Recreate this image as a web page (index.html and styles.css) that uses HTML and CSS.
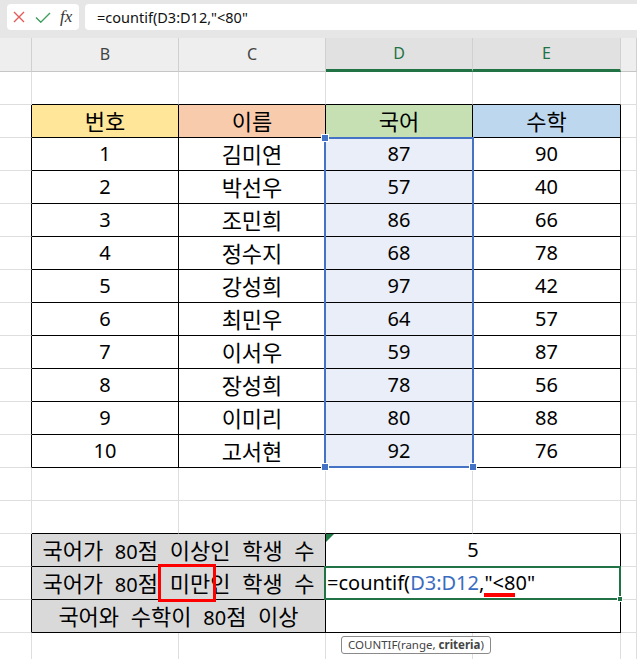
FILE: index.html
```html
<!DOCTYPE html>
<html lang="ko">
<head>
<meta charset="utf-8">
<title>COUNTIF</title>
<link rel="stylesheet" href="styles.css">
</head>
<body>
<div class="topbar">
  <div class="icons">
    <svg class="ix" viewBox="0 0 12 12"><path d="M1 1L11 11M11 1L1 11" stroke="#e25b5b" stroke-width="1.4" fill="none"/></svg>
    <svg class="ic" viewBox="0 0 16 11"><path d="M1 5.4L5.8 10.2L15 1" stroke="#3f9d5e" stroke-width="1.4" fill="none"/></svg>
    <span class="fx">fx</span>
  </div>
  <div class="formula">=countif(D3:D12,"&lt;80"</div>
</div>

<div class="sheet">
  <div class="row hdr">
    <div class="c"></div><div class="c">B</div><div class="c">C</div><div class="c on">D</div><div class="c on">E</div><div class="c"></div>
  </div>
  <div class="row">
    <div class="c"></div><div class="c tb"></div><div class="c tb"></div><div class="c tb"></div><div class="c tb"></div><div class="c"></div>
  </div>
  <div class="row">
    <div class="c lb"></div><div class="c t ko h1">번호</div><div class="c t ko h2">이름</div><div class="c t ko h3">국어</div><div class="c t ko h4">수학</div><div class="c"></div>
  </div>
  <div class="row"><div class="c lb"></div><div class="c t">1</div><div class="c t ko">김미연</div><div class="c t d">87</div><div class="c t">90</div><div class="c"></div></div>
  <div class="row"><div class="c lb"></div><div class="c t">2</div><div class="c t ko">박선우</div><div class="c t d">57</div><div class="c t">40</div><div class="c"></div></div>
  <div class="row"><div class="c lb"></div><div class="c t">3</div><div class="c t ko">조민희</div><div class="c t d">86</div><div class="c t">66</div><div class="c"></div></div>
  <div class="row"><div class="c lb"></div><div class="c t">4</div><div class="c t ko">정수지</div><div class="c t d">68</div><div class="c t">78</div><div class="c"></div></div>
  <div class="row"><div class="c lb"></div><div class="c t">5</div><div class="c t ko">강성희</div><div class="c t d">97</div><div class="c t">42</div><div class="c"></div></div>
  <div class="row"><div class="c lb"></div><div class="c t">6</div><div class="c t ko">최민우</div><div class="c t d">64</div><div class="c t">57</div><div class="c"></div></div>
  <div class="row"><div class="c lb"></div><div class="c t">7</div><div class="c t ko">이서우</div><div class="c t d">59</div><div class="c t">87</div><div class="c"></div></div>
  <div class="row"><div class="c lb"></div><div class="c t">8</div><div class="c t ko">장성희</div><div class="c t d">78</div><div class="c t">56</div><div class="c"></div></div>
  <div class="row"><div class="c lb"></div><div class="c t">9</div><div class="c t ko">이미리</div><div class="c t d">80</div><div class="c t">88</div><div class="c"></div></div>
  <div class="row"><div class="c lb"></div><div class="c t">10</div><div class="c t ko">고서현</div><div class="c t d">92</div><div class="c t">76</div><div class="c"></div></div>
  <div class="row">
    <div class="c"></div><div class="c"></div><div class="c"></div><div class="c"></div><div class="c"></div><div class="c"></div>
  </div>
  <div class="row">
    <div class="c"></div><div class="c tb"></div><div class="c tb"></div><div class="c tb"></div><div class="c tb"></div><div class="c"></div>
  </div>
  <div class="row">
    <div class="c lb"></div><div class="c t ko lab span2">국어가 <span class="n">80</span>점 이상인 학생 수</div><div class="c t span2 flag"><span class="tri"></span>5</div><div class="c"></div>
  </div>
  <div class="row">
    <div class="c lb"></div><div class="c t ko lab span2">국어가 <span class="n">80</span>점 <span class="mm">미만</span>인 학생 수</div><div class="c t span2 edit">=countif(<span class="ref">D3:D12</span>,<span class="ul">"&lt;8</span>0"</div><div class="c"></div>
  </div>
  <div class="row">
    <div class="c lb"></div><div class="c t ko lab span2">국어와 수학이 <span class="n">80</span>점 이상</div><div class="c t span2"></div><div class="c"></div>
  </div>
  <div class="row">
    <div class="c"></div><div class="c"></div><div class="c"></div><div class="c"></div><div class="c"></div><div class="c"></div>
  </div>

  <div class="selbox">
    <span class="hnd tl"></span><span class="hnd bl"></span><span class="hnd br"></span>
  </div>
  <div class="active"><span class="ahnd"></span></div>
  <div class="tip">COUNTIF(range, <b>criteria</b>)</div>
</div>
</body>
</html>
```

FILE: styles.css
```css
* { box-sizing: border-box; }
html, body { margin: 0; padding: 0; }
body {
  width: 637px;
  height: 659px;
  overflow: hidden;
  background: #fff;
  font-family: "Noto Sans", "Noto Sans CJK KR", sans-serif;
  color: #000;
}

/* formula bar */
.topbar {
  height: 38px;
  background: #e6e6e6;
  display: flex;
  align-items: flex-start;
  gap: 6px;
  padding: 4px 0 0 7px;
}
.icons {
  width: 72px;
  height: 26px;
  background: #fff;
  border-radius: 4px;
  display: flex;
  align-items: center;
  padding-left: 6px;
}
.ix { width: 12px; height: 12px; }
.ic { width: 16px; height: 11px; margin-left: 10px; }
.fx {
  margin-left: 9px;
  font-family: "Liberation Serif", "DejaVu Serif", serif;
  font-style: italic;
  font-size: 17px;
  line-height: 26px;
  color: #333;
}
.formula {
  flex: 1;
  height: 26px;
  margin-right: -10px;
  background: #fff;
  border-radius: 4px;
  padding-left: 12px;
  font-size: 14.5px;
  line-height: 26px;
  color: #111;
  white-space: nowrap;
}

/* sheet */
.sheet { position: relative; }
.row {
  display: grid;
  grid-template-columns: 32px 147px 147px 147px 148px 1fr;
  grid-template-rows: 33px;
  height: 33px;
}
.c {
  border-right: 1px solid #dedede;
  border-bottom: 1px solid #dedede;
  text-align: center;
  font-size: 20px;
  line-height: 32px;
  white-space: nowrap;
  min-height: 0;
}
.ko { font-size: 22px; }
.n { font-size: 20px; line-height: 20px; }
.hdr { height: 34px; grid-template-rows: 34px; }
.hdr .c {
  background: #eeeeee;
  border-right-color: #d0d0d0;
  border-bottom-color: #c6c6c6;
  font-size: 16px;
  line-height: 33px;
  color: #444;
}
.hdr .c.on {
  background: #e1e1e1;
  color: #217346;
  border-bottom: 3px solid #217346;
  line-height: 31px;
}

.t { border-right-color: #000; border-bottom-color: #000; }
.tb { border-bottom-color: #000; }
.lb { border-right-color: #000; }

.h1 { background: #ffe699; }
.h2 { background: #f8cbad; }
.h3 { background: #c6e0b4; }
.h4 { background: #bdd7ee; }
.d { background: #e9eef8; }

.span2 { grid-column: span 2; }
.lab { background: #d9d9d9; word-spacing: 6px; }

.flag { position: relative; }
.tri {
  position: absolute;
  left: 0;
  top: 0;
  width: 8px;
  height: 8px;
  background: #1f7a47;
  clip-path: polygon(0 0, 100% 0, 0 100%);
}

.mm { position: relative; }
.mm::after {
  content: "";
  position: absolute;
  left: -12px;
  right: -6px;
  top: -4px;
  bottom: -4px;
  border: 3px solid #ff0000;
}

.edit { text-align: left; padding-left: 1px; }
.ref { color: #3a6cc0; }
.ul { position: relative; }
.ul::after {
  content: "";
  position: absolute;
  left: 0;
  right: 0;
  bottom: -1px;
  height: 4px;
  background: #ff0000;
}

/* overlays */
.selbox {
  position: absolute;
  left: 324px;
  top: 99px;
  width: 150px;
  height: 331px;
  border: 2px solid #4472c4;
}
.hnd {
  position: absolute;
  width: 8px;
  height: 8px;
  background: #4472c4;
  border: 1px solid #fff;
}
.hnd.tl { left: -5px; top: -5px; }
.hnd.bl { left: -5px; bottom: -5px; }
.hnd.br { right: -5px; bottom: -5px; }

.active {
  position: absolute;
  left: 324px;
  top: 528px;
  width: 297px;
  height: 34px;
  border: 2px solid #217346;
}
.ahnd {
  position: absolute;
  right: -4px;
  bottom: -4px;
  width: 6px;
  height: 6px;
  background: #217346;
  border: 1px solid #fff;
}

.tip {
  position: absolute;
  left: 341px;
  top: 598px;
  height: 18px;
  padding: 0 6px;
  border: 1px solid #8a8a8a;
  border-radius: 3px;
  background: #fff;
  font-size: 11.5px;
  line-height: 16px;
  color: #444;
  white-space: nowrap;
}
.tip b { font-weight: 700; }
```
